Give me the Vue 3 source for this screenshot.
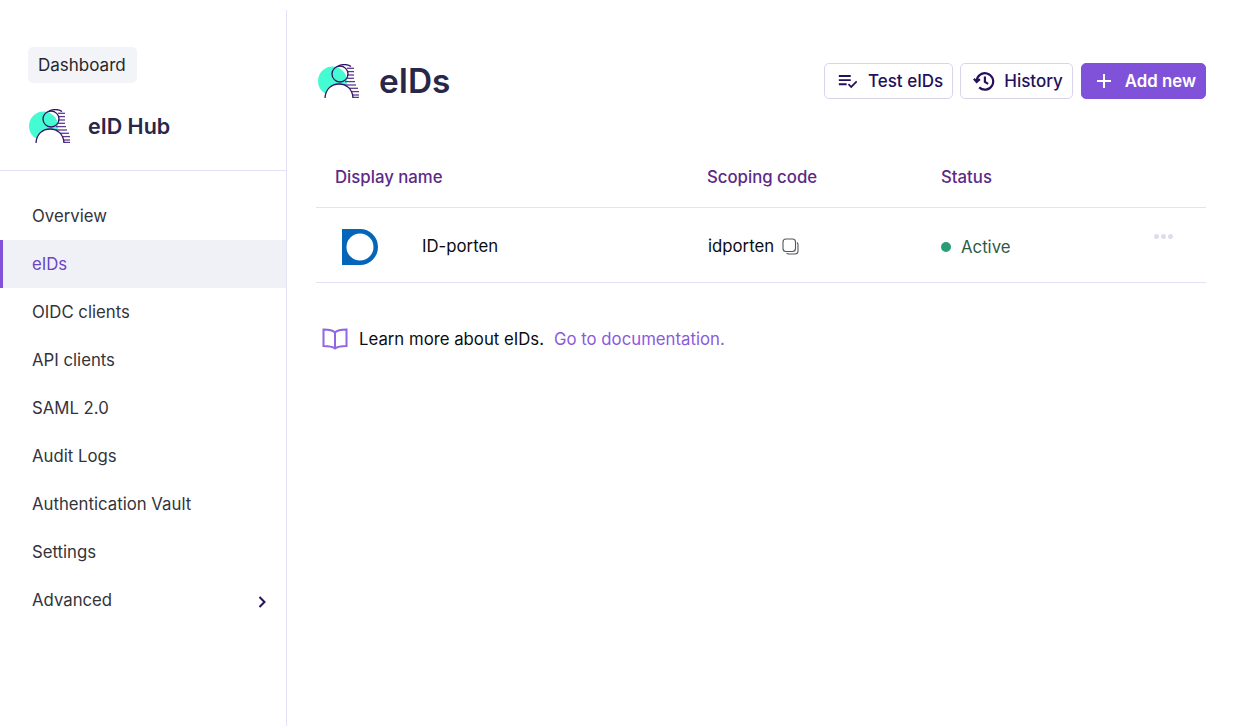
<template>
  <div class="page">
    <aside class="sidebar">
      <div class="side-head">
        <a class="crumb">Dashboard</a>
        <div class="brand">
          <svg class="logo" viewBox="0 0 42 34" fill="none">
            <circle cx="14.5" cy="17" r="14.5" fill="#44fbd2" />
            <g stroke="#5b3a93" stroke-width="1.3">
              <path v-for="s in logoStripes" :key="s.y" :d="`M${s.x} ${s.y}H${s.end}`" />
            </g>
            <g stroke="#2f1466" stroke-width="1.3">
              <path fill="#fff" d="M7 34C7.500 25 13.500 20 21 20S34.500 25 35 34" />
              <circle cx="22" cy="10" r="8" />
              <path d="M20 2C24 0 30 0 33 2.500" />
            </g>
          </svg>
          <span class="brand-name">eID Hub</span>
        </div>
      </div>
      <nav class="nav">
        <a v-for="item in navItems" :key="item" class="nav-item" :class="{ active: item === 'eIDs' }">{{ item }}</a>
        <a class="nav-item adv">
          Advanced
          <svg class="chev" viewBox="0 0 10 14" fill="none" stroke="#24105c" stroke-width="2"><path d="M2.5 2l5 5-5 5" /></svg>
        </a>
      </nav>
    </aside>

    <main class="main">
      <header class="top">
        <div class="title-wrap">
          <svg class="logo" viewBox="0 0 42 34" fill="none">
            <circle cx="14.5" cy="17" r="14.5" fill="#44fbd2" />
            <g stroke="#5b3a93" stroke-width="1.3">
              <path v-for="s in logoStripes" :key="s.y" :d="`M${s.x} ${s.y}H${s.end}`" />
            </g>
            <g stroke="#2f1466" stroke-width="1.3">
              <path fill="#fff" d="M7 34C7.500 25 13.500 20 21 20S34.500 25 35 34" />
              <circle cx="22" cy="10" r="8" />
              <path d="M20 2C24 0 30 0 33 2.500" />
            </g>
          </svg>
          <h1>eIDs</h1>
        </div>
        <div class="actions">
          <button class="btn">
            <svg class="btn-icon" viewBox="0 0 24 24" fill="#24105c"><path d="M2 5.5h13v2H2zM2 10h13v2H2zM2 14.5h8.5v2H2z" /><path d="M12.5 15.500l3 3 6-6" fill="none" stroke="#24105c" stroke-width="1.8" /></svg>
            Test eIDs
          </button>
          <button class="btn">
            <svg class="btn-icon hist" viewBox="0 0 24 24" fill="none" stroke="#24105c" stroke-width="2.4"><path d="M4 12.500A9 9 0 1 1 6.800 19" /><path d="M1 9.500l3 3.500 3.500-3" /><path d="M13 7V13l3.500 2.200" /></svg>
            History
          </button>
          <button class="btn primary">
            <svg class="btn-icon plus" viewBox="0 0 16 16" fill="none" stroke="#fff" stroke-width="2"><path d="M8 1v14M1 8h14" /></svg>
            Add new
          </button>
        </div>
      </header>

      <div class="table">
        <div class="thead">
          <span>Display name</span>
          <span>Scoping code</span>
          <span>Status</span>
        </div>
        <div class="trow">
          <div class="cell-name">
            <svg class="idp" viewBox="0 0 36 36"><path fill-rule="evenodd" fill="#0565b8" d="M0 0h18a18 18 0 0 1 0 36H0zM18 4.500a13.500 13.500 0 1 0 0 27a13.500 13.500 0 0 0 0-27z" /></svg>
            <span>ID-porten</span>
          </div>
          <div class="cell-code">
            <span>idporten</span>
            <svg class="copy" viewBox="0 0 17 17" fill="none" stroke="#55555e" stroke-width="1.1"><rect x="1" y="1" width="12.500" height="12.500" rx="3" /><path d="M15 4.500c.6.500 1 1.200 1 2.200v6c0 1.800-1.500 3.300-3.300 3.300h-6c-1 0-1.700-.4-2.200-1" /></svg>
          </div>
          <div class="cell-status"><i class="dot"></i>Active</div>
          <div class="more"><i></i><i></i><i></i></div>
        </div>
      </div>

      <p class="learn">
        <svg class="book" viewBox="0 0 26 22" fill="none" stroke="#8f66e4" stroke-width="2"><path d="M13 4.500C11 2.500 8 1.500 1.500 1.500v16.500c6.500 0 9.500 1 11.500 2.500 2-1.500 5-2.500 11.500-2.500V1.500C18 1.500 15 2.500 13 4.500zM13 4.500v16" /></svg>
        <span>Learn more about eIDs.</span>
        <a class="doc">Go to documentation.</a>
      </p>
    </main>
  </div>
</template>

<script setup>
const navItems = ['Overview', 'eIDs', 'OIDC clients', 'API clients', 'SAML 2.0', 'Audit Logs', 'Authentication Vault', 'Settings']

// stripes behind the person in the logo, they get wider toward the bottom
const logoStripes = [
  { y: 4.3, x: 29, end: 36 },
  { y: 7.6, x: 29, end: 36 },
  { y: 11, x: 29, end: 36 },
  { y: 14.3, x: 29, end: 36 },
  { y: 17.6, x: 27, end: 37 },
  { y: 21, x: 24, end: 38 },
  { y: 24.3, x: 30, end: 40 },
  { y: 27.6, x: 32, end: 41 },
  { y: 31, x: 33, end: 41 },
  { y: 33.4, x: 34, end: 41 }
]
</script>

<style scoped>
.page {
  display: flex;
  height: 716px;
  padding-top: 10px;
  font-family: Inter, "Liberation Sans", sans-serif;
  font-size: 16.75px;
  background: #fff;
  overflow: hidden;
}

.sidebar {
  width: 286px;
  flex-shrink: 0;
  border-right: 1px solid #e5e1f5;
}

.side-head {
  padding: 37px 0 0;
  border-bottom: 1px solid #e5e1f5;
  box-sizing: border-box;
  height: 161px;
}

.crumb {
  display: inline-block;
  margin-left: 28px;
  padding: 0 11px 0 10px;
  height: 36px;
  line-height: 36px;
  font-size: 17px;
  color: #26262e;
  background: #f3f4f8;
  border-radius: 5px;
}

.brand {
  display: flex;
  align-items: center;
  gap: 17px;
  margin: 26px 0 0 29px;
}

.logo {
  width: 42px;
  height: 34px;
  flex-shrink: 0;
}

.brand-name {
  font-size: 21.5px;
  font-weight: 600;
  color: #29264a;
}

.nav {
  display: flex;
  flex-direction: column;
  padding-top: 21px;
}

.nav-item {
  display: flex;
  align-items: center;
  height: 48px;
  box-sizing: border-box;
  padding-left: 32px;
  color: #33333b;
}

.nav-item.active {
  padding-left: 29px;
  border-left: 3px solid #7f52d9;
  background: #f0f1f6;
  color: #6a45c4;
}

.nav-item.adv {
  justify-content: space-between;
  padding-right: 19px;
}

.chev {
  width: 10px;
  height: 14px;
  margin-top: 4px;
}

.main {
  flex: 1;
  padding: 0 48px 0 29px;
  min-width: 0;
}

.top {
  display: flex;
  align-items: center;
  justify-content: space-between;
  height: 36px;
  margin-top: 53px;
}

.title-wrap {
  display: flex;
  align-items: center;
  gap: 19px;
  padding-left: 2px;
}

h1 {
  margin: 0;
  font-size: 33.4px;
  font-weight: 600;
  color: #29264a;
}

.actions {
  display: flex;
  gap: 8px;
}

.btn {
  display: flex;
  align-items: center;
  height: 36px;
  padding: 0 9px 0 12px;
  font-family: inherit;
  font-size: 17px;
  font-weight: 500;
  color: #24105c;
  background: #fff;
  border: 1px solid #d9d4ec;
  border-radius: 5px;
  gap: 9px;
}

.btn:first-child {
  margin-right: -1px;
}

.btn.primary {
  padding: 0 9px 0 14px;
  gap: 13px;
  font-size: 16.8px;
  color: #fff;
  background: #7f52d9;
  border-color: #7f52d9;
  font-weight: 600;
}

.btn-icon {
  width: 22px;
  height: 22px;
}

.btn-icon.plus {
  width: 16px;
  height: 16px;
}

.table {
  margin-top: 55px;
}

.thead,
.trow {
  display: grid;
  grid-template-columns: 391px 234px 1fr;
  border-bottom: 1px solid #e5e1f5;
}

.thead {
  height: 54px;
  box-sizing: border-box;
  padding-bottom: 8px;
  font-weight: 500;
  color: #5b2a86;
  align-items: center;
}

.thead span:first-child {
  padding-left: 19px;
}

.trow {
  position: relative;
  height: 75px;
  box-sizing: border-box;
  padding-top: 2px;
  align-items: center;
  color: #0c0c12;
}

.cell-name {
  display: flex;
  align-items: center;
  gap: 44px;
  padding-left: 26px;
}

.idp {
  width: 36px;
  height: 36px;
  margin: 1px 0 -1px;
}

.cell-code {
  display: flex;
  align-items: center;
  gap: 8px;
  padding-left: 1px;
}

.copy {
  width: 17px;
  height: 17px;
}

.cell-status {
  display: flex;
  align-items: center;
  gap: 10px;
  color: #2d5a46;
  padding-top: 2px;
}

.dot {
  width: 10px;
  height: 10px;
  border-radius: 50%;
  background: #2a9d78;
}

/* row menu sits up in the row corner */
.more {
  position: absolute;
  right: 33px;
  top: 26px;
  display: flex;
  gap: 2px;
}

.more i {
  width: 5px;
  height: 5px;
  border-radius: 50%;
  background: #e0dbea;
}

.learn {
  display: flex;
  align-items: center;
  margin: 45px 0 0 6px;
  color: #0c0c12;
}

.book {
  width: 26px;
  height: 22px;
  margin-right: 11px;
}

.doc {
  margin-left: 10px;
  color: #8a5bdc;
}
</style>

<style>
body {
  background: #fff;
}
</style>
